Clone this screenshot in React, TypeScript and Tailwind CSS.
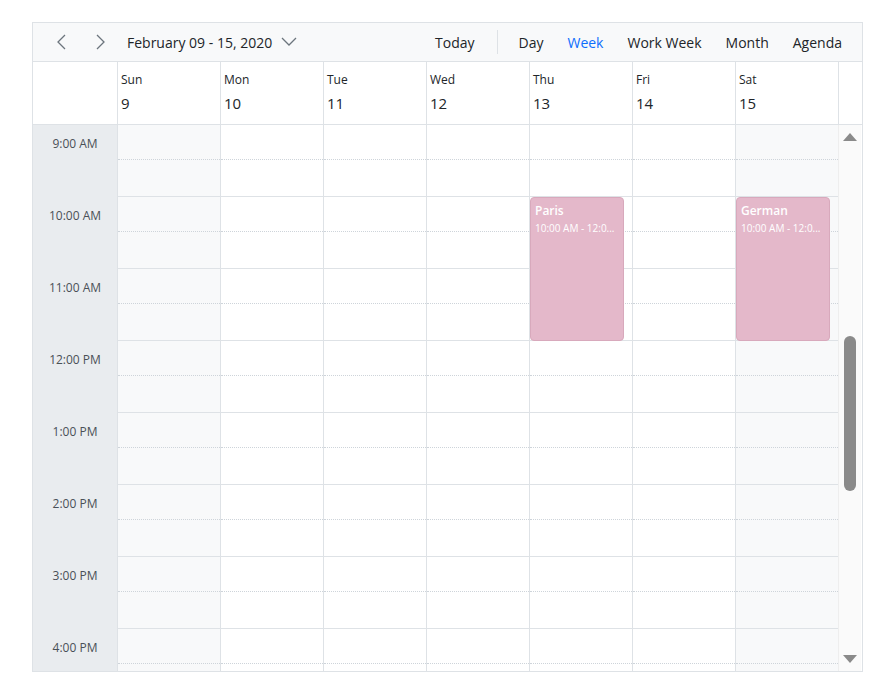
import React from "react";

const days = [
  ["Sun", "9"], ["Mon", "10"], ["Tue", "11"], ["Wed", "12"], ["Thu", "13"], ["Fri", "14"], ["Sat", "15"],
];
const hours = ["9:00 AM", "10:00 AM", "11:00 AM", "12:00 PM", "1:00 PM", "2:00 PM", "3:00 PM", "4:00 PM"];

export default function App() {
  return (
    <div className="bg-white w-[883px] h-[686px] pt-[22px] pl-[32px]" style={{ fontFamily: '"Open Sans", "Noto Sans", sans-serif' }}>
      <div className="w-[831px] h-[650px] border border-[#dee2e6] flex flex-col overflow-hidden text-[#212529]">
        <div className="h-[39px] bg-[#f8f9fa] border-b border-[#dee2e6] flex items-center text-[14px] shrink-0">
          <svg width="14" height="16" viewBox="0 0 14 16" className="ml-[22px]"><path d="M10 1 L3 8 L10 15" fill="none" stroke="#6c757d" strokeWidth="1.3" /></svg>
          <svg width="14" height="16" viewBox="0 0 14 16" className="ml-[24px]"><path d="M4 1 L11 8 L4 15" fill="none" stroke="#6c757d" strokeWidth="1.3" /></svg>
          <span className="ml-[20px]">February 09 - 15, 2020</span>
          <svg width="16" height="10" viewBox="0 0 16 10" className="ml-[9px]"><path d="M1 1 L8 8 L15 1" fill="none" stroke="#6c757d" strokeWidth="1.3" /></svg>
          <span className="ml-auto">Today</span>
          <span className="ml-[22px] w-px h-[24px] bg-[#dee2e6]" />
          <span className="ml-[21px]">Day</span>
          <span className="ml-[24px] text-[#0d6efd]">Week</span>
          <span className="ml-[24px]">Work Week</span>
          <span className="ml-[24px]">Month</span>
          <span className="ml-[24px] mr-[20px]">Agenda</span>
        </div>
        <div className="flex h-[63px] border-b border-[#dee2e6] shrink-0">
          <div className="w-[84px] shrink-0" />
          {days.map(([d, n]) => (
            <div key={d} className="w-[103px] shrink-0 border-l border-[#dee2e6] pl-[3px] pt-[10px]">
              <div className="text-[12px] leading-[16px]">{d}</div>
              <div className="text-[15px] leading-[20px] mt-[5px]">{n}</div>
            </div>
          ))}
          <div className="w-[1px] shrink-0 border-l border-[#dee2e6]" />
        </div>
        <div className="flex flex-1 overflow-hidden relative">
          <div className="w-[84px] shrink-0 bg-[#e9ecef]">
            {hours.map((h) => (
              <div key={h} className="h-[72px] text-[12px] text-[#495057] text-center pt-[10px]">{h}</div>
            ))}
          </div>
          {days.map(([d], i) => (
            <div key={d} className={`w-[103px] shrink-0 border-l border-[#dee2e6] relative ${i === 0 || i === 6 ? "bg-[#f8f9fa]" : "bg-white"}`}>
              {hours.map((h) => (
                <div key={h} className="h-[72px] border-b border-[#dee2e6] flex flex-col">
                  <div className="h-[35px] border-b border-dotted border-[#ced4da]" />
                </div>
              ))}
              {(d === "Thu" || d === "Sat") && (
                <div className="absolute top-[72px] left-[0px] w-[94px] h-[144px] rounded-[4px] bg-[#e4b8ca] border border-[#d8a9bc] px-[4px] pt-[5px] text-white overflow-hidden">
                  <div className="text-[12px] font-semibold leading-[16px]">{d === "Thu" ? "Paris" : "German"}</div>
                  <div className="text-[10px] leading-[14px] mt-[2px] whitespace-nowrap">10:00 AM - 12:0...</div>
                </div>
              )}
            </div>
          ))}
          <div className="w-[23px] shrink-0 bg-[#fafafa] border-l border-[#eeeeee] relative">
            <svg width="14" height="10" viewBox="0 0 14 10" className="absolute top-[7px] left-[4px]"><path d="M0 9 L7 1 L14 9 Z" fill="#8a8a8a" /></svg>
            <div className="absolute top-[211px] left-[5px] w-[12px] h-[155px] rounded-[6px] bg-[#8a8a8a]" />
            <svg width="14" height="10" viewBox="0 0 14 10" className="absolute top-[529px] left-[4px]"><path d="M0 1 L7 9 L14 1 Z" fill="#8a8a8a" /></svg>
          </div>
        </div>
      </div>
    </div>
  );
}
